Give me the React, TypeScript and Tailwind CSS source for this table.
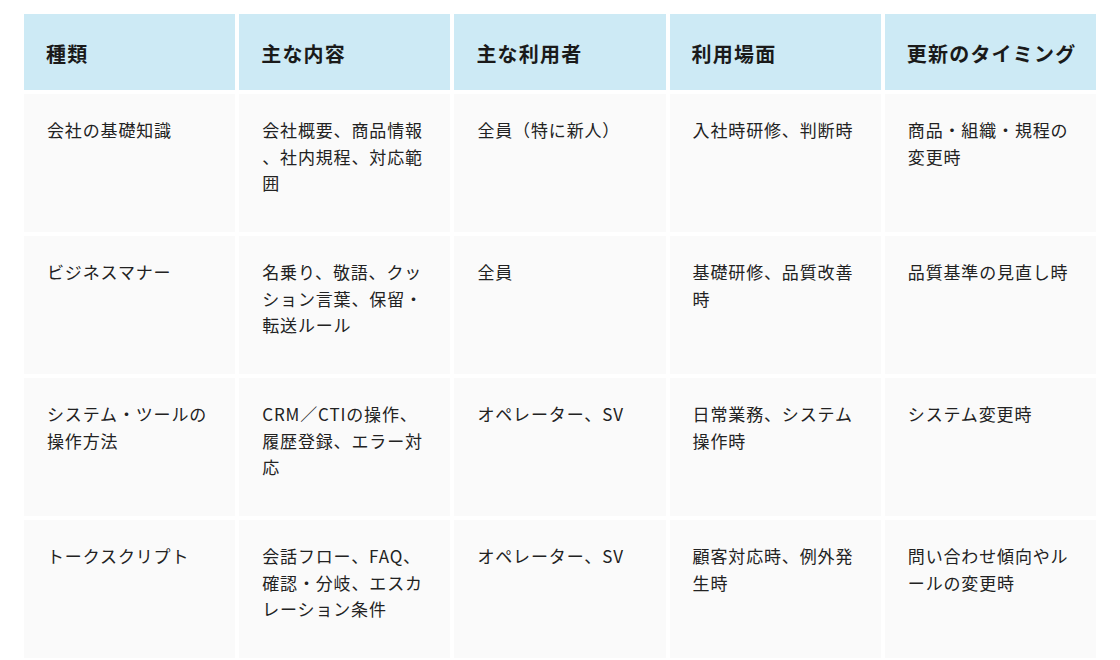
import React from "react";

const headers = ["種類", "主な内容", "主な利用者", "利用場面", "更新のタイミング"];

const rows: string[][][] = [
  [
    ["会社の基礎知識"],
    ["会社概要、商品情報", "、社内規程、対応範", "囲"],
    ["全員（特に新人）"],
    ["入社時研修、判断時"],
    ["商品・組織・規程の", "変更時"],
  ],
  [
    ["ビジネスマナー"],
    ["名乗り、敬語、クッ", "ション言葉、保留・", "転送ルール"],
    ["全員"],
    ["基礎研修、品質改善", "時"],
    ["品質基準の見直し時"],
  ],
  [
    ["システム・ツールの", "操作方法"],
    ["CRM／CTIの操作、", "履歴登録、エラー対", "応"],
    ["オペレーター、SV"],
    ["日常業務、システム", "操作時"],
    ["システム変更時"],
  ],
  [
    ["トークスクリプト"],
    ["会話フロー、FAQ、", "確認・分岐、エスカ", "レーション条件"],
    ["オペレーター、SV"],
    ["顧客対応時、例外発", "生時"],
    ["問い合わせ傾向やル", "ールの変更時"],
  ],
];

export default function App() {
  return (
    <div
      className="w-[1120px] h-[660px] overflow-hidden bg-white pl-[24px] pt-[14px]"
      style={{ fontFamily: '"Noto Sans CJK JP", "Noto Sans", sans-serif' }}
    >
      <div className="grid w-[1072px] grid-cols-5 gap-[4px]">
        {headers.map((h) => (
          <div
            key={h}
            className="flex h-[76px] items-center bg-[#cdeaf5] pl-[22px] pt-[3px] text-[20px] font-bold tracking-[0.06em] text-[#1a1a1a] whitespace-nowrap"
          >
            {h}
          </div>
        ))}
        {rows.map((row, ri) =>
          row.map((cell, ci) => (
            <div
              key={`${ri}-${ci}`}
              className="h-[138px] bg-[#fafafa] pl-[23px] pt-[23px] text-[17px] leading-[26.6px] tracking-[0.05em] text-[#222222]"
            >
              {cell.map((line, li) => (
                <span key={li} className="block whitespace-nowrap">
                  {line}
                </span>
              ))}
            </div>
          ))
        )}
      </div>
    </div>
  );
}
